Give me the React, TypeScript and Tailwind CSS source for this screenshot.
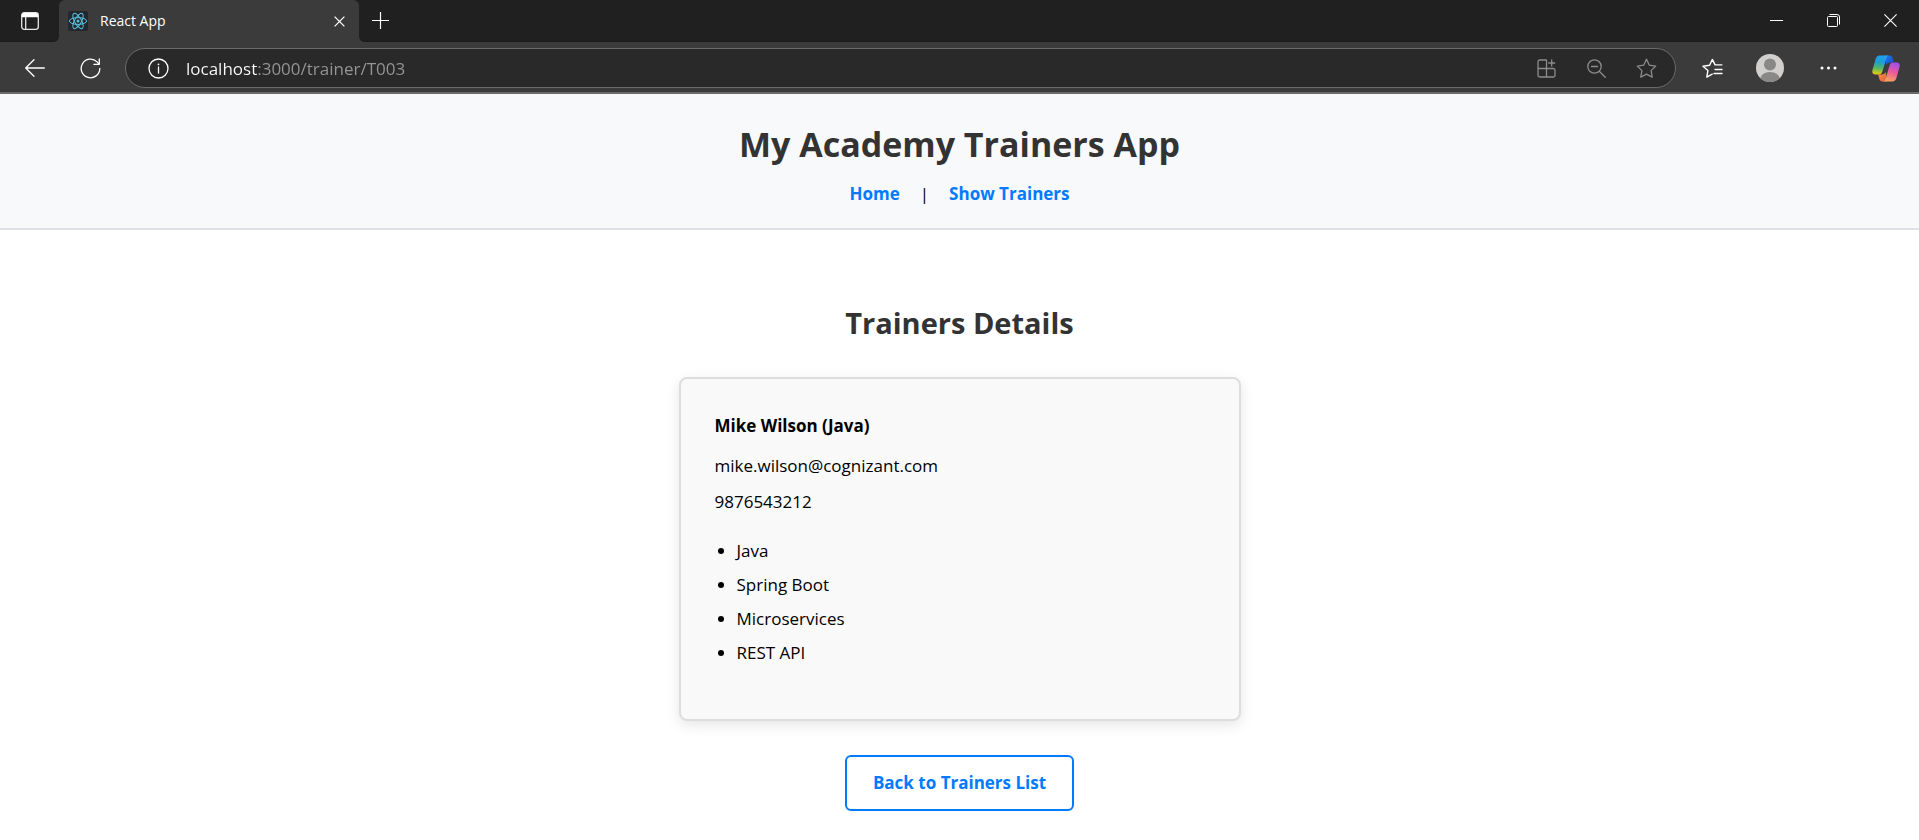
import type { ReactNode } from "react";

const trainer = {
  name: "Mike Wilson",
  technology: "Java",
  email: "mike.wilson@cognizant.com",
  phone: "9876543212",
  skills: ["Java", "Spring Boot", "Microservices", "REST API"],
};

function IconButton({ label, className, children }: { label: string; className: string; children: ReactNode }) {
  return (
    <button type="button" aria-label={label} className={`flex shrink-0 items-center justify-center ${className}`}>
      {children}
    </button>
  );
}

function ReactLogo() {
  return (
    <svg width="20" height="20" viewBox="0 0 20 20" fill="none" stroke="#58c4dc" strokeWidth="1">
      <rect width="20" height="20" rx="2" fill="#23272f" stroke="none" />
      <circle cx="10" cy="10" r="1.5" fill="#58c4dc" stroke="none" />
      <ellipse cx="10" cy="10" rx="8.6" ry="3.4" />
      <ellipse cx="10" cy="10" rx="8.6" ry="3.4" transform="rotate(60 10 10)" />
      <ellipse cx="10" cy="10" rx="8.6" ry="3.4" transform="rotate(120 10 10)" />
    </svg>
  );
}

function CopilotLogo() {
  return (
    <svg width="28" height="27" viewBox="0 0 28 27">
      <defs>
        <linearGradient id="cp-left" x1="0.4" y1="0" x2="0.3" y2="1">
          <stop offset="0" stopColor="#1ba1f0" />
          <stop offset="0.35" stopColor="#1f9fd0" />
          <stop offset="0.65" stopColor="#4fb867" />
          <stop offset="1" stopColor="#f2c80f" />
        </linearGradient>
        <linearGradient id="cp-right" x1="0.7" y1="0" x2="0.4" y2="1">
          <stop offset="0" stopColor="#a04df0" />
          <stop offset="0.5" stopColor="#ea5a9c" />
          <stop offset="1" stopColor="#fba35c" />
        </linearGradient>
        <linearGradient id="cp-top" x1="0" y1="0" x2="1" y2="1">
          <stop offset="0" stopColor="#1b7fe8" />
          <stop offset="1" stopColor="#1b44c8" />
        </linearGradient>
        <linearGradient id="cp-bottom" x1="0" y1="0" x2="1" y2="1">
          <stop offset="0" stopColor="#f9a03a" />
          <stop offset="1" stopColor="#ef4f4a" />
        </linearGradient>
      </defs>
      <path d="M13 .5h4.6c1.7 0 2.5.9 3 2.400l1.200 4.600h-3.600c-2 0-3.200.8-3.800 2.600z" fill="url(#cp-top)" />
      <path d="M15 26.500h-4.600c-1.700 0-2.500-.9-3-2.400l-1.200-4.700h3.600c2 0 3.200-.8 3.800-2.600z" fill="url(#cp-bottom)" />
      <path d="M7.500.5H17c-1.400.2-2.100 1.200-2.600 2.900l-4 13.200c-.6 2-1.700 2.900-3.600 2.900H3.600C.8 19.500-.2 17.500.5 14.900L3.600 4C4.300 1.700 5.500.5 7.500.5z" fill="url(#cp-left)" />
      <path d="M20.500 26.500H11c1.400-.2 2.100-1.200 2.600-2.900l4-13.200c.6-2 1.700-2.900 3.600-2.900h3.200c2.800 0 3.800 2 3.100 4.600L24.400 23c-.7 2.300-1.900 3.500-3.900 3.500z" fill="url(#cp-right)" />
    </svg>
  );
}

function TabStrip() {
  return (
    <div className="flex h-[42px] bg-[#3b3b3b] text-white">
      <div className="flex w-[59px] shrink-0 rounded-br-md border-b border-[#1a1a1a] bg-[#202020]">
        <IconButton label="Tab actions" className="w-full">
          <svg width="18" height="18" viewBox="0 0 18 18" fill="none" stroke="#e6e6e6" strokeWidth="1.300">
            <rect x="0.700" y="0.700" width="16.600" height="16.600" rx="2.500" />
            <path d="M1 3a2 2 0 0 1 2-2h12a2 2 0 0 1 2 2v2.200H1z" fill="#fff" stroke="none" />
            <path d="M4.700 5v12" />
          </svg>
        </IconButton>
      </div>
      <div className="flex w-full max-w-[300px] bg-[#202020]">
        <div className="flex w-full items-center rounded-t-md bg-[#3b3b3b] pl-[9px]">
          <ReactLogo />
          <span className="ml-3 font-['Open_Sans','Noto_Sans',sans-serif] text-sm leading-5">React App</span>
          <IconButton label="Close tab" className="mr-1 ml-auto h-8 w-8">
            <svg width="11" height="11" viewBox="0 0 11 11" stroke="#fff" strokeWidth="1.300">
              <path d="M.6.6l9.800 9.800M10.400.6L.6 10.400" />
            </svg>
          </IconButton>
        </div>
      </div>
      <div className="flex flex-1 rounded-bl-md border-b border-[#1a1a1a] bg-[#202020]">
        <IconButton label="New tab" className="w-[42px]">
          <svg width="17" height="17" viewBox="0 0 17 17" stroke="#fff" strokeWidth="1.200">
            <path d="M8.500 0v17M0 8.500h17" />
          </svg>
        </IconButton>
        <div className="ml-auto flex">
          <IconButton label="Minimize" className="w-[57px]">
            <svg width="13" height="13" viewBox="0 0 13 13" stroke="#fff">
              <path d="M0 6.500h13" />
            </svg>
          </IconButton>
          <IconButton label="Restore" className="w-[57px]">
            <svg width="13" height="13" viewBox="0 0 13 13" fill="none" stroke="#fff">
              <rect x="0.500" y="2.500" width="10" height="10" rx="1" />
              <path d="M2.500.5h7.500a2.500 2.500 0 0 1 2.500 2.500v7.500" />
            </svg>
          </IconButton>
          <IconButton label="Close" className="w-[57px]">
            <svg width="13" height="13" viewBox="0 0 13 13" stroke="#fff" strokeWidth="1.100">
              <path d="M.4.4l12.200 12.200M12.600.4L.4 12.600" />
            </svg>
          </IconButton>
        </div>
      </div>
    </div>
  );
}

function Toolbar() {
  return (
    <div className="flex h-[52px] items-center border-b-2 border-[#6b6b6b] bg-[#3b3b3b] pt-0.5 pr-1 pl-2 text-white">
      <IconButton label="Back" className="h-10 w-[54px]">
        <svg width="20" height="18" viewBox="0 0 20 18" fill="none" stroke="#fff" strokeWidth="1.300" strokeLinecap="round" strokeLinejoin="round">
          <path d="M19.300 9H.7M9 .7L.7 9 9 17.300" />
        </svg>
      </IconButton>
      <IconButton label="Refresh" className="h-10 w-14">
        <svg width="21" height="21" viewBox="0 0 21 21" fill="none" stroke="#fff" strokeWidth="1.300" strokeLinecap="round" strokeLinejoin="round">
          <path d="M19.800 10.500a9.300 9.300 0 1 1-2.700-6.600l1.900 2.200" />
          <path d="M19.300.9v5.400h-5.400" />
        </svg>
      </IconButton>
      <div className="mx-[7px] flex h-10 min-w-0 flex-1 items-center rounded-full border border-[#6a6a6a] bg-[#292929] px-1">
        <IconButton label="View site information" className="h-8 w-14">
          <svg width="21" height="21" viewBox="0 0 21 21" fill="none" stroke="#fff" strokeWidth="1.300">
            <circle cx="10.500" cy="10.500" r="9.500" />
            <path d="M10.500 9v6" strokeLinecap="round" />
            <circle cx="10.500" cy="6.300" r="0.900" fill="#fff" stroke="none" />
          </svg>
        </IconButton>
        <input
          type="text"
          aria-label="Address bar"
          defaultValue="localhost:3000/trainer/T003"
          className="h-8 min-w-0 flex-1 bg-[linear-gradient(90deg,#ffffff_71px,#969696_71px)] bg-clip-text font-['Open_Sans','Noto_Sans',sans-serif] text-[17px] text-transparent caret-white outline-none"
        />
        <IconButton label="Install app" className="h-8 w-[50px]">
          <svg width="19" height="19" viewBox="0 0 19 19" fill="none" stroke="#8c8c8c" strokeWidth="1.300" strokeLinecap="round">
            <path d="M9.500 1H2.800A1.800 1.800 0 0 0 1 2.800v13.400A1.800 1.800 0 0 0 2.800 18h13.400a1.800 1.800 0 0 0 1.800-1.800v-4.900a1.800 1.800 0 0 0-1.800-1.800H1M9.500 1v17M14.700 1v6M11.700 4h6" />
          </svg>
        </IconButton>
        <IconButton label="Zoom" className="h-8 w-[50px]">
          <svg width="19" height="19" viewBox="0 0 19 19" fill="none" stroke="#8c8c8c" strokeWidth="1.300" strokeLinecap="round">
            <circle cx="7.500" cy="7.500" r="6.700" />
            <path d="M4.500 7.500h6M12.300 12.300l5.900 5.900" />
          </svg>
        </IconButton>
        <IconButton label="Add to favorites" className="h-8 w-[50px]">
          <svg width="21" height="21" viewBox="0 0 21 21" fill="none" stroke="#8c8c8c" strokeWidth="1.300" strokeLinejoin="round">
            <path d="M10.500 1.300l2.800 5.900 6.400.9-4.600 4.500 1.100 6.500-5.700-3-5.700 3 1.100-6.500L1.300 8.100l6.400-.9z" />
          </svg>
        </IconButton>
      </div>
      <IconButton label="Favorites" className="h-10 w-[58px]">
        <svg width="21" height="21" viewBox="0 0 21 21" fill="none" stroke="#fff" strokeWidth="1.400" strokeLinecap="round" strokeLinejoin="round">
          <path d="M10.200 16.200l-5.400 2.900 1.100-6.500L1 8.200l6.600-1L10.400 1.400l2.700 5.500h6.700M13 11.500h7M12 15.500h8" />
        </svg>
      </IconButton>
      <IconButton label="Profile" className="h-10 w-[58px]">
        <svg width="28" height="28" viewBox="0 0 28 28">
          <clipPath id="avatar">
            <circle cx="14" cy="14" r="14" />
          </clipPath>
          <g clipPath="url(#avatar)">
            <rect width="28" height="28" fill="#d2d0ce" />
            <circle cx="14" cy="10.500" r="6" fill="#8a8886" />
            <ellipse cx="14" cy="25" rx="9.800" ry="7" fill="#8a8886" />
          </g>
        </svg>
      </IconButton>
      <IconButton label="Settings and more" className="h-10 w-[58px]">
        <svg width="17" height="4" viewBox="0 0 17 4" fill="#fff">
          <circle cx="2" cy="2" r="1.500" />
          <circle cx="8.500" cy="2" r="1.500" />
          <circle cx="15" cy="2" r="1.500" />
        </svg>
      </IconButton>
      <IconButton label="Copilot" className="h-10 w-[58px]">
        <CopilotLogo />
      </IconButton>
    </div>
  );
}

export default function App() {
  return (
    <div className="min-h-screen bg-white font-['Open_Sans','Noto_Sans',sans-serif] text-[17px] leading-6 text-black">
      <TabStrip />
      <Toolbar />
      <header className="border-b-2 border-[#dee2e6] bg-[#f8f9fa] px-6 pt-[25px] pb-[22px] text-center">
        <h1 className="text-[34px] leading-[50px] font-bold text-[#333333]">My Academy Trainers App</h1>
        <nav className="mt-[13px] flex items-center justify-center">
          <a href="#home" className="font-bold text-[#007bff]">Home</a>
          <span className="mx-5">|</span>
          <a href="#trainers" className="font-bold text-[#007bff]">Show Trainers</a>
        </nav>
      </header>
      <main className="flex flex-col items-center px-6 pt-[70px] pb-[28px]">
        <h2 className="text-[29px] leading-[46px] font-bold text-[#333333]">Trainers Details</h2>
        <section className="mt-[31px] w-full max-w-[562px] rounded-lg border-2 border-[#dddddd] bg-[#f9f9f9] px-[34px] pt-[35px] pb-[54px] shadow-[0_4px_14px_rgba(0,0,0,0.1)]">
          <h3 className="font-bold">
            {trainer.name} ({trainer.technology})
          </h3>
          <p className="mt-4">{trainer.email}</p>
          <p className="mt-3">{trainer.phone}</p>
          <ul className="mt-[25px] flex list-disc flex-col gap-[10px] pl-[22px]">
            {trainer.skills.map((skill) => (
              <li key={skill}>{skill}</li>
            ))}
          </ul>
        </section>
        <a href="#trainers" className="mt-[34px] rounded-md border-2 border-[#007bff] px-[26px] py-[14px] font-bold text-[#007bff]">
          Back to Trainers List
        </a>
      </main>
    </div>
  );
}
